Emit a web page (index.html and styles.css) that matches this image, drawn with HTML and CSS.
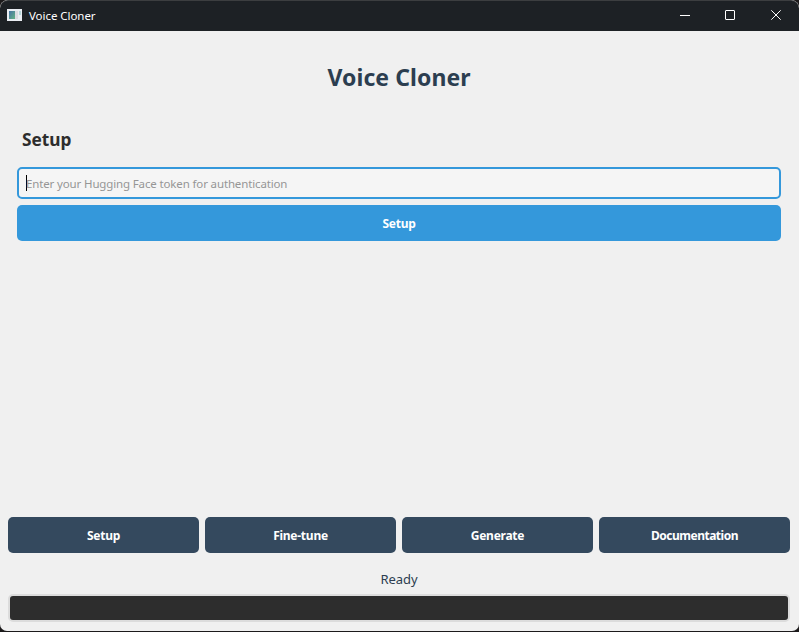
FILE: index.html
```html
<!DOCTYPE html>
<html lang="en">
<head>
<meta charset="utf-8">
<title>Voice Cloner</title>
<link rel="stylesheet" href="styles.css">
</head>
<body>
<div class="window">
  <header class="titlebar">
    <svg class="app-icon" width="15" height="12" viewBox="0 0 15 12">
      <defs><linearGradient id="pane" x1="0" y1="0" x2="1" y2="1"><stop offset="0" stop-color="#4673a5"/><stop offset="1" stop-color="#63b283"/></linearGradient></defs>
      <rect width="15" height="12" fill="#e9edf2"/>
      <rect x="2" y="2" width="6" height="8" fill="url(#pane)"/>
      <rect x="8" y="2" width="3" height="8" fill="#d9dbe0"/>
      <rect x="12" y="2" width="2" height="4" fill="#b4d6d8"/>
    </svg>
    <span class="app-name">Voice Cloner</span>
    <div class="controls">
      <svg width="46" height="30" viewBox="0 0 46 30"><path d="M18 15.500h10"/></svg>
      <svg width="45" height="30" viewBox="0 0 45 30"><rect x="17.500" y="10.500" width="9" height="9" rx=".5"/></svg>
      <svg width="46" height="30" viewBox="0 0 46 30"><path d="M18.300 10.300l9.400 9.400M27.700 10.300l-9.400 9.400"/></svg>
    </div>
  </header>
  <main class="content">
    <h1><span>Voice Cloner</span></h1>
    <section class="page">
      <h2><span>Setup</span></h2>
      <div class="field"><i class="caret"></i><span class="placeholder">Enter your Hugging Face token for authentication</span></div>
      <button class="button primary"><span>Setup</span></button>
    </section>
    <nav class="nav">
      <button class="button"><span>Setup</span></button>
      <button class="button"><span>Fine-tune</span></button>
      <button class="button"><span>Generate</span></button>
      <button class="button long"><span>Documentation</span></button>
    </nav>
    <div class="status"><span>Ready</span></div>
    <div class="progress"></div>
  </main>
</div>
</body>
</html>
```
FILE: styles.css
```css
* { box-sizing: border-box; }
body {
  margin: 0;
  height: 632px;
  overflow: hidden;
  background: #1c1a1b;
  font-family: "Noto Sans", "Open Sans", sans-serif;
}
.window {
  height: 631px;
  display: flex;
  flex-direction: column;
  border-radius: 8px 8px 7px 7px;
  overflow: hidden;
  background: #f0f0f0;
}
.titlebar {
  height: 31px;
  display: flex;
  align-items: center;
  padding-left: 7px;
  background: #1d2125;
  border-top: 1px solid #3c3e40;
  border-radius: 8px 8px 0 0;
  color: #fff;
}
.app-icon { margin-right: 7px; margin-bottom: 2px; }
.app-name { font-size: 11.5px; letter-spacing: -0.05px; margin-bottom: 2px; }
.controls { display: flex; margin-left: auto; height: 30px; margin-top: -2px; }
.controls svg { fill: none; stroke: #fff; stroke-width: 1; }
.content {
  flex: 1;
  display: flex;
  flex-direction: column;
  padding: 8px 9px 9px 8px;
}
h1 {
  margin: 0;
  height: 77px;
  line-height: 76px;
  text-align: center;
  font-size: 23px;
  letter-spacing: 0.07px;
  color: #2c3e50;
}
.page { flex: 1; padding: 0 9px; display: flex; flex-direction: column; }
h2 {
  margin: 0;
  height: 51px;
  padding: 9px 5px 0;
  line-height: 30px;
  font-size: 17.3px;
  color: #2d2d2d;
}
.field {
  height: 32px;
  display: flex;
  align-items: center;
  border: 2px solid #3498db;
  border-radius: 5px;
  background: #f5f5f5;
  padding-left: 7px;
  margin-bottom: 6px;
}
.caret { width: 1px; height: 16px; background: #000; margin-right: -1px; }
.placeholder { font-size: 11.5px; letter-spacing: -0.14px; color: #969696; white-space: nowrap; }
.button {
  height: 36px;
  padding: 0;
  border: 0;
  border-radius: 5px;
  background: #34495e;
  color: #fff;
  font: bold 12px "Noto Sans", "Open Sans", sans-serif;
  letter-spacing: -0.25px;
}
.primary { background: #3498db; }
.long { letter-spacing: -0.5px; }
.nav { display: grid; grid-template-columns: repeat(4, 1fr); gap: 6px; }
.status {
  height: 41px;
  padding-top: 11px;
  line-height: 30px;
  text-align: center;
  font-size: 13px;
  letter-spacing: -0.1px;
  color: #2d3e50;
}
.progress {
  height: 28px;
  border: 2px solid #dcdcdc;
  border-radius: 5px;
  background: #2d2d2d;
}
```
